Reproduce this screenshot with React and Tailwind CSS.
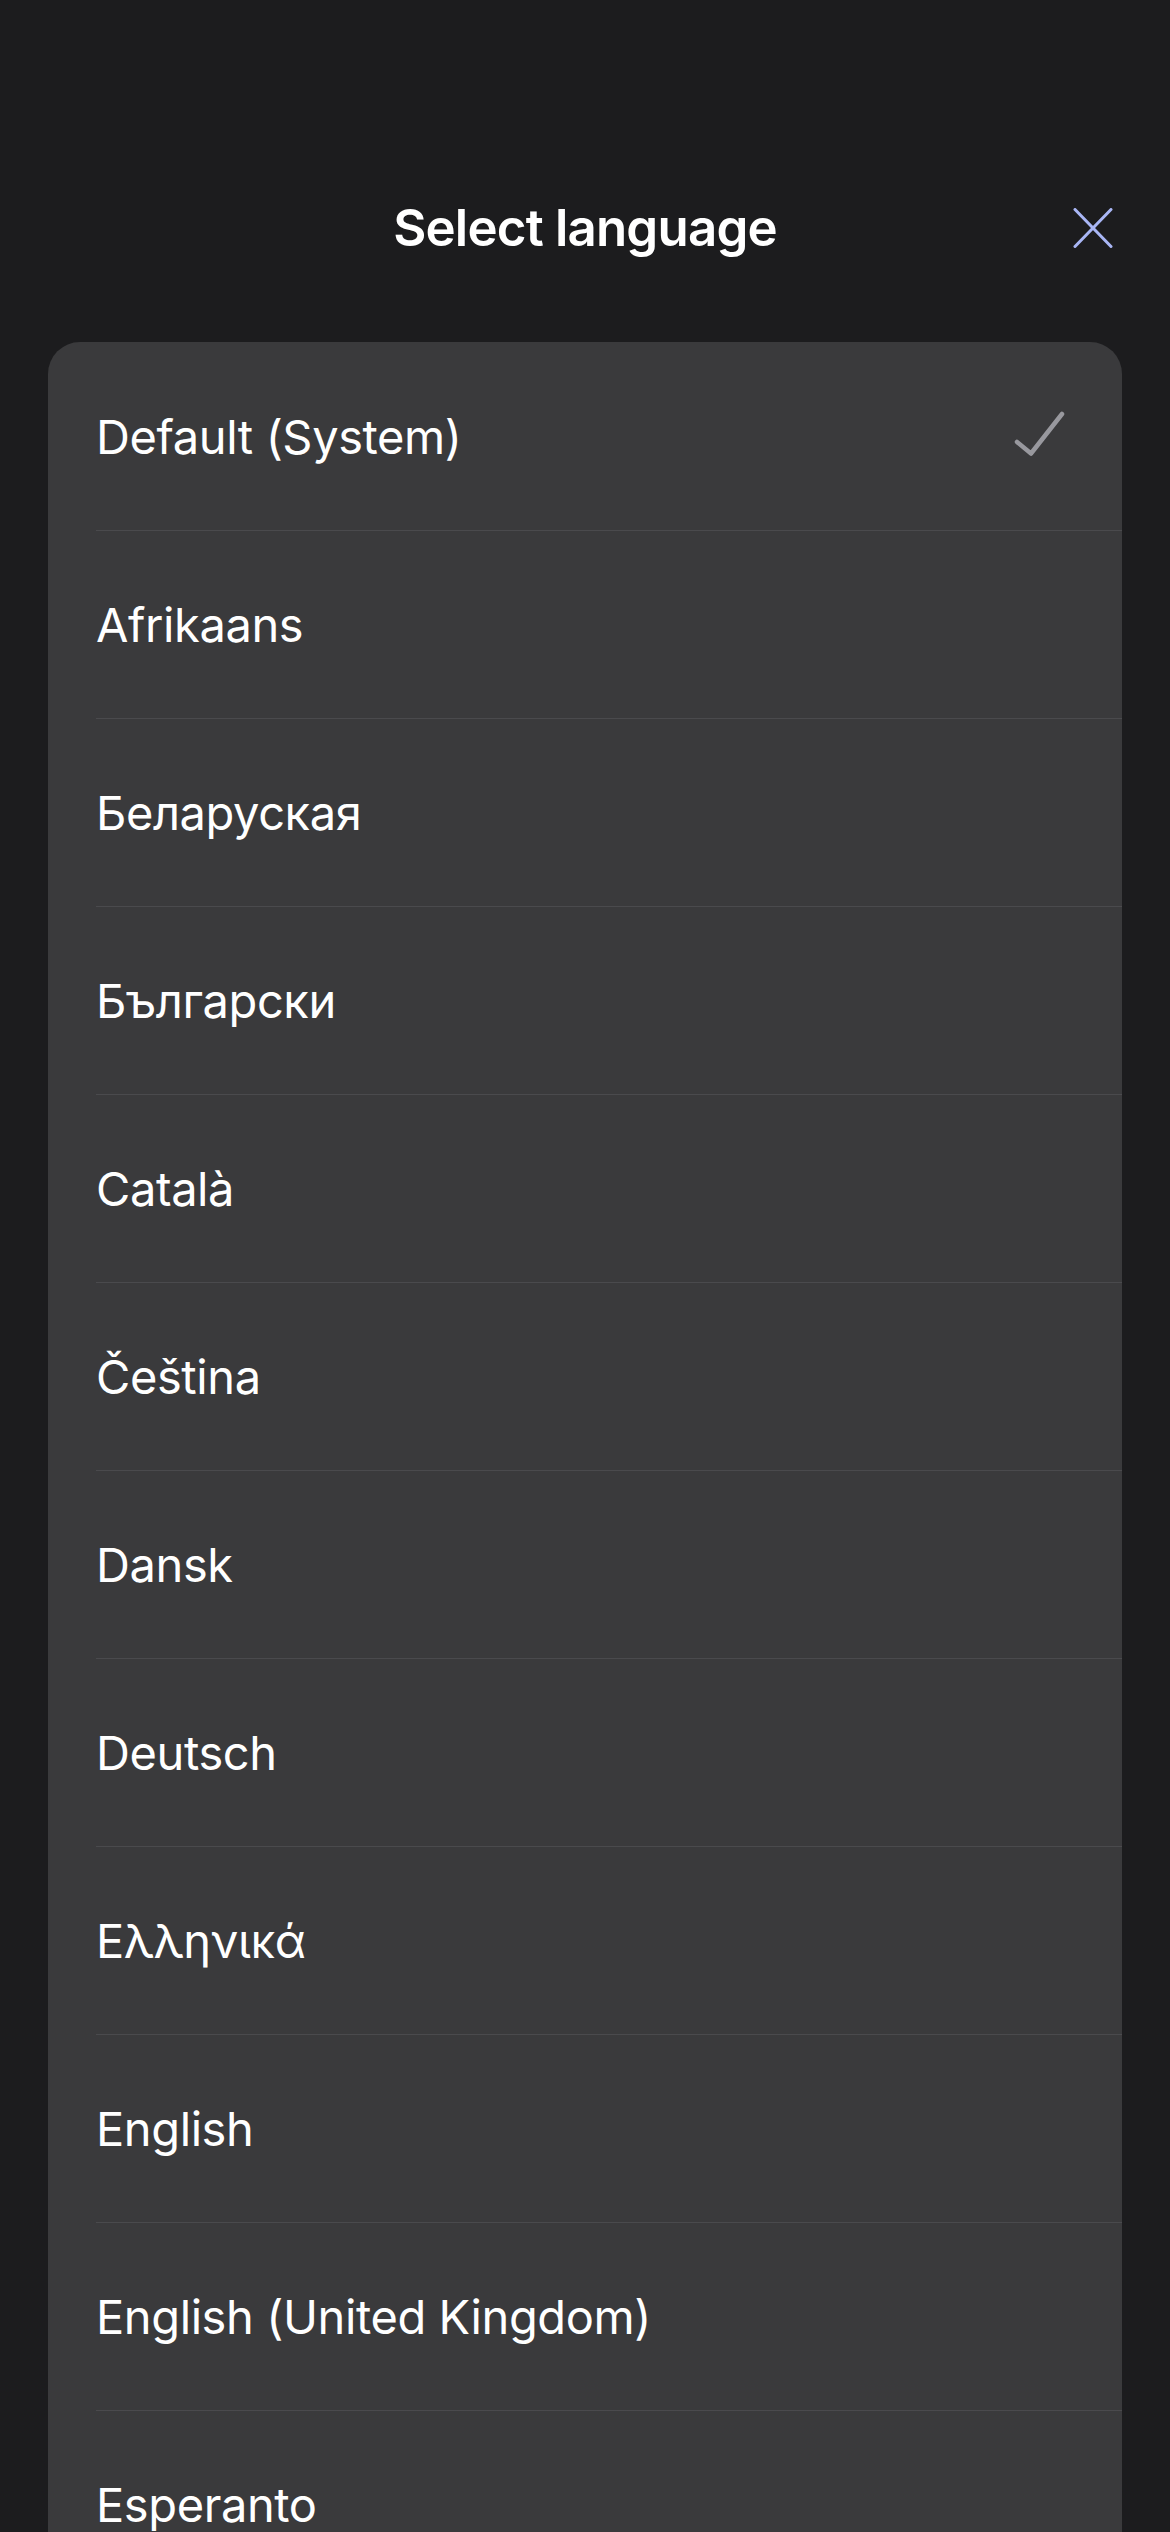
import React from "react";

const langs = [
  "Default (System)",
  "Afrikaans",
  "Беларуская",
  "Български",
  "Català",
  "Čeština",
  "Dansk",
  "Deutsch",
  "Ελληνικά",
  "English",
  "English (United Kingdom)",
  "Esperanto",
];

export default function App() {
  return (
    <div
      className="w-[1170px] h-[2532px] overflow-hidden bg-[#1c1c1e] text-white"
      style={{ fontFamily: "Inter, 'Noto Sans', sans-serif" }}
    >
      <div className="h-[342px] pt-[177px]">
        <div className="relative h-[100px] flex items-center justify-center">
          <h1 className="text-[51px] font-semibold tracking-[-0.8px] leading-none">Select language</h1>
          <button className="absolute right-[57px] top-[31px] w-[40px] h-[40px]">
            <svg width="40" height="40" viewBox="0 0 40 40" fill="none">
              <path d="M2 1.5 L38 38.5 M38 1.5 L2 38.5" stroke="#a9b6f5" strokeWidth="3" strokeLinecap="round" />
            </svg>
          </button>
        </div>
      </div>
      <div className="mx-[48px] bg-[#3a3a3c] rounded-t-[32px] overflow-hidden">
        {langs.map((l, i) => (
          <div key={l} className="pl-[48px]">
            <div
              className={
                "h-[188px] flex items-center justify-between pr-[57px] " +
                (i > 0 ? "border-t border-[#4a4a4d]" : "")
              }
            >
              <span className="text-[47px] leading-none tracking-[-0.4px]">{l}</span>
              {i === 0 && (
                <svg width="52" height="50" viewBox="0 0 52 50" fill="none">
                  <path d="M4 31 L18 42.5 L49 3" stroke="#98989e" strokeWidth="4.5" strokeLinecap="round" strokeLinejoin="round" />
                </svg>
              )}
            </div>
          </div>
        ))}
      </div>
    </div>
  );
}
